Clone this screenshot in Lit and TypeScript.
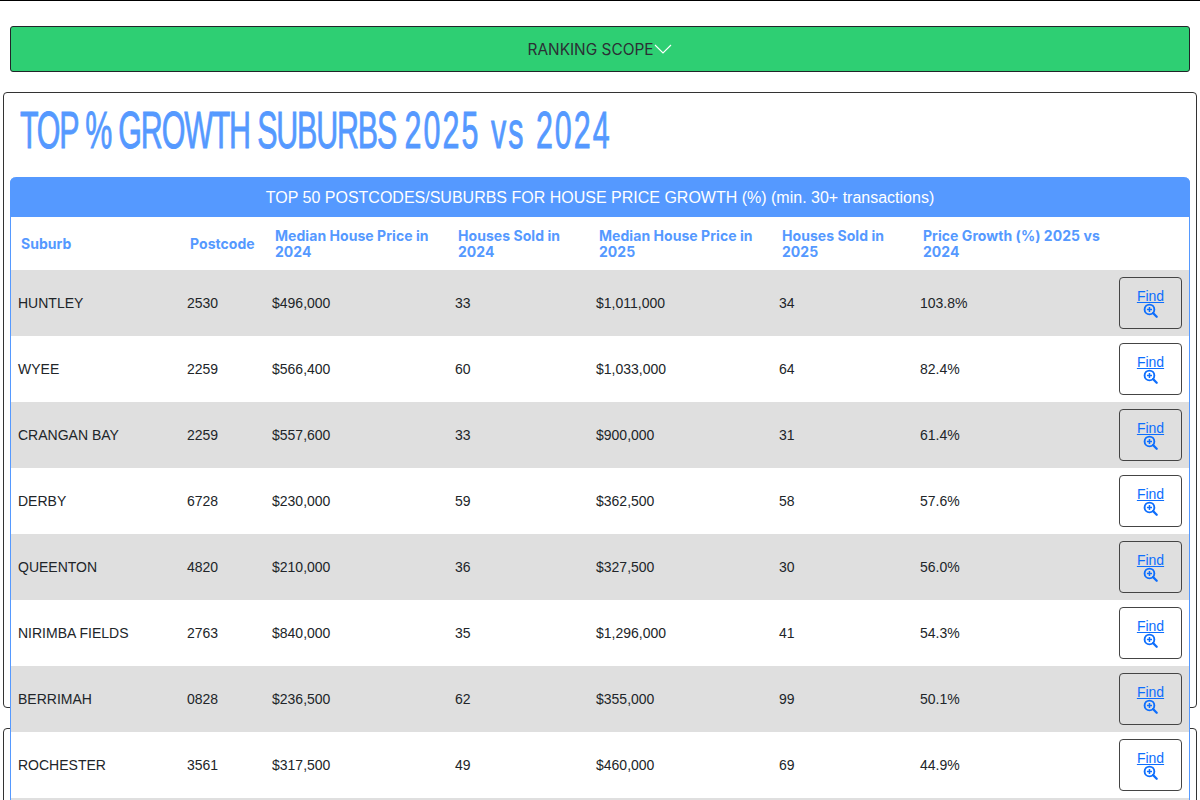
import { LitElement, html, css, svg } from "lit";
import { customElement } from "lit/decorators.js";

const rows = [
  ["HUNTLEY", "2530", "$496,000", "33", "$1,011,000", "34", "103.8%"],
  ["WYEE", "2259", "$566,400", "60", "$1,033,000", "64", "82.4%"],
  ["CRANGAN BAY", "2259", "$557,600", "33", "$900,000", "31", "61.4%"],
  ["DERBY", "6728", "$230,000", "59", "$362,500", "58", "57.6%"],
  ["QUEENTON", "4820", "$210,000", "36", "$327,500", "30", "56.0%"],
  ["NIRIMBA FIELDS", "2763", "$840,000", "35", "$1,296,000", "41", "54.3%"],
  ["BERRIMAH", "0828", "$236,500", "62", "$355,000", "99", "50.1%"],
  ["ROCHESTER", "3561", "$317,500", "49", "$460,000", "69", "44.9%"],
];
const heads = [
  "Suburb",
  "Postcode",
  "Median House Price in 2024",
  "Houses Sold in 2024",
  "Median House Price in 2025",
  "Houses Sold in 2025",
  "Price Growth (%) 2025 vs 2024",
  "",
];
const widths = [169, 85, 183, 141, 183, 141, 199, 77];

const zoomIcon = svg`<svg class="zoom" viewBox="0 0 16 16" fill="none" stroke="currentColor">
  <circle cx="6.9" cy="6.9" r="5.2" stroke-width="2"></circle>
  <path d="M10.8 10.8 14.6 14.6" stroke-width="2.4" stroke-linecap="round"></path>
  <path d="M6.9 4.2v5.4M4.2 6.9h5.4" stroke-width="1.6"></path>
</svg>`;

@customElement("app-root")
export class AppRoot extends LitElement {
  static styles = css`
    :host {
      display: block;
      height: 800px;
      overflow: hidden;
      box-sizing: border-box;
      border-top: 1px solid #000;
      background: #fff;
      font-family: "Liberation Sans", Arial, sans-serif;
      color: #212529;
    }
    .scope {
      margin: 25px 10px 20px;
      height: 46px;
      box-sizing: border-box;
      border: 1px solid #212529;
      border-radius: 3px;
      background: #2ecf73;
      display: flex;
      align-items: center;
      justify-content: center;
      gap: 1px;
      font-family: Inter, sans-serif;
      font-size: 15.4px;
      color: #2b3035;
    }
    .chev { width: 18px; height: 10px; color: #fff; }
    .card {
      margin: 0 3px 20px;
      border: 1px solid #333;
      border-radius: 4px;
      background: #fff;
      box-sizing: border-box;
    }
    .first { height: 616px; padding: 0 6px; }
    .second { height: 200px; }
    h1 {
      margin: 0;
      height: 84px;
      padding-left: 10px;
      font-family: "Liberation Sans", sans-serif;
      font-weight: 400;
      font-size: 52px;
      line-height: 74px;
      -webkit-text-stroke: 0.9px #5599ff;
      color: #5599ff;
      white-space: nowrap;
      transform: scaleX(0.585);
      transform-origin: 10px 0;
    }
    .tight { letter-spacing: -2px; }
    .loose { letter-spacing: 3.5px; }
    .panel {
      position: relative;
      z-index: 1;
      width: 1180px;
      box-sizing: border-box;
      border: 1px solid #5599ff;
      border-top: 0;
      border-radius: 6px 6px 0 0;
      background: #fff;
    }
    .cap {
      height: 40px;
      box-sizing: border-box;
      padding-top: 1px;
      margin: 0 -1px;
      background: #5599ff;
      border-radius: 6px 6px 0 0;
      color: #fff;
      font-size: 16px;
      display: flex;
      align-items: center;
      justify-content: center;
    }
    table { border-collapse: collapse; table-layout: fixed; width: 1178px; }
    th {
      padding: 0 10px;
      height: 53px;
      box-sizing: border-box;
      text-align: left;
      font-family: Inter, sans-serif;
      font-size: 14px;
      letter-spacing: 0.05px;
      font-weight: 700;
      line-height: 16px;
      color: #5599ff;
    }
    td {
      padding: 7px;
      height: 66px;
      box-sizing: border-box;
      font-size: 14px;
      color: #212529;
    }
    tbody tr:nth-child(odd) { background: #dfdfdf; }
    .find {
      width: 63px;
      height: 52px;
      box-sizing: border-box;
      border: 1px solid #444;
      border-radius: 4px;
      display: flex;
      flex-direction: column;
      align-items: center;
      justify-content: center;
      color: #0d6efd;
    }
    .find a { color: inherit; text-decoration: underline; line-height: 16px; font-size: 14px; }
    .zoom { width: 15px; height: 15px; display: block; margin: -1px 0 1px; }
  `;

  render() {
    return html`
      <div class="scope">
        <span>RANKING SCOPE</span>
        <svg class="chev" viewBox="0 0 18 10" fill="none" stroke="currentColor" stroke-width="1.1"><path d="M1 1l8 8 8-8"></path></svg>
      </div>
      <section class="card first">
        <h1><span class="tight">TOP % GROWTH SUBURBS</span> <span class="loose">2025 vs 2024</span></h1>
        <div class="panel">
          <div class="cap">TOP 50 POSTCODES/SUBURBS FOR HOUSE PRICE GROWTH (%) (min. 30+ transactions)</div>
          <table>
            <colgroup>${widths.map((w) => html`<col style="width:${w}px" />`)}</colgroup>
            <thead><tr>${heads.map((h) => html`<th>${h}</th>`)}</tr></thead>
            <tbody>
              ${rows.map(
                (r) => html`<tr>
                  ${r.map((c) => html`<td>${c}</td>`)}
                  <td><div class="find"><a href="#">Find</a>${zoomIcon}</div></td>
                </tr>`
              )}
              <tr><td colspan="8"></td></tr>
            </tbody>
          </table>
        </div>
      </section>
      <section class="card second"></section>
    `;
  }
}
